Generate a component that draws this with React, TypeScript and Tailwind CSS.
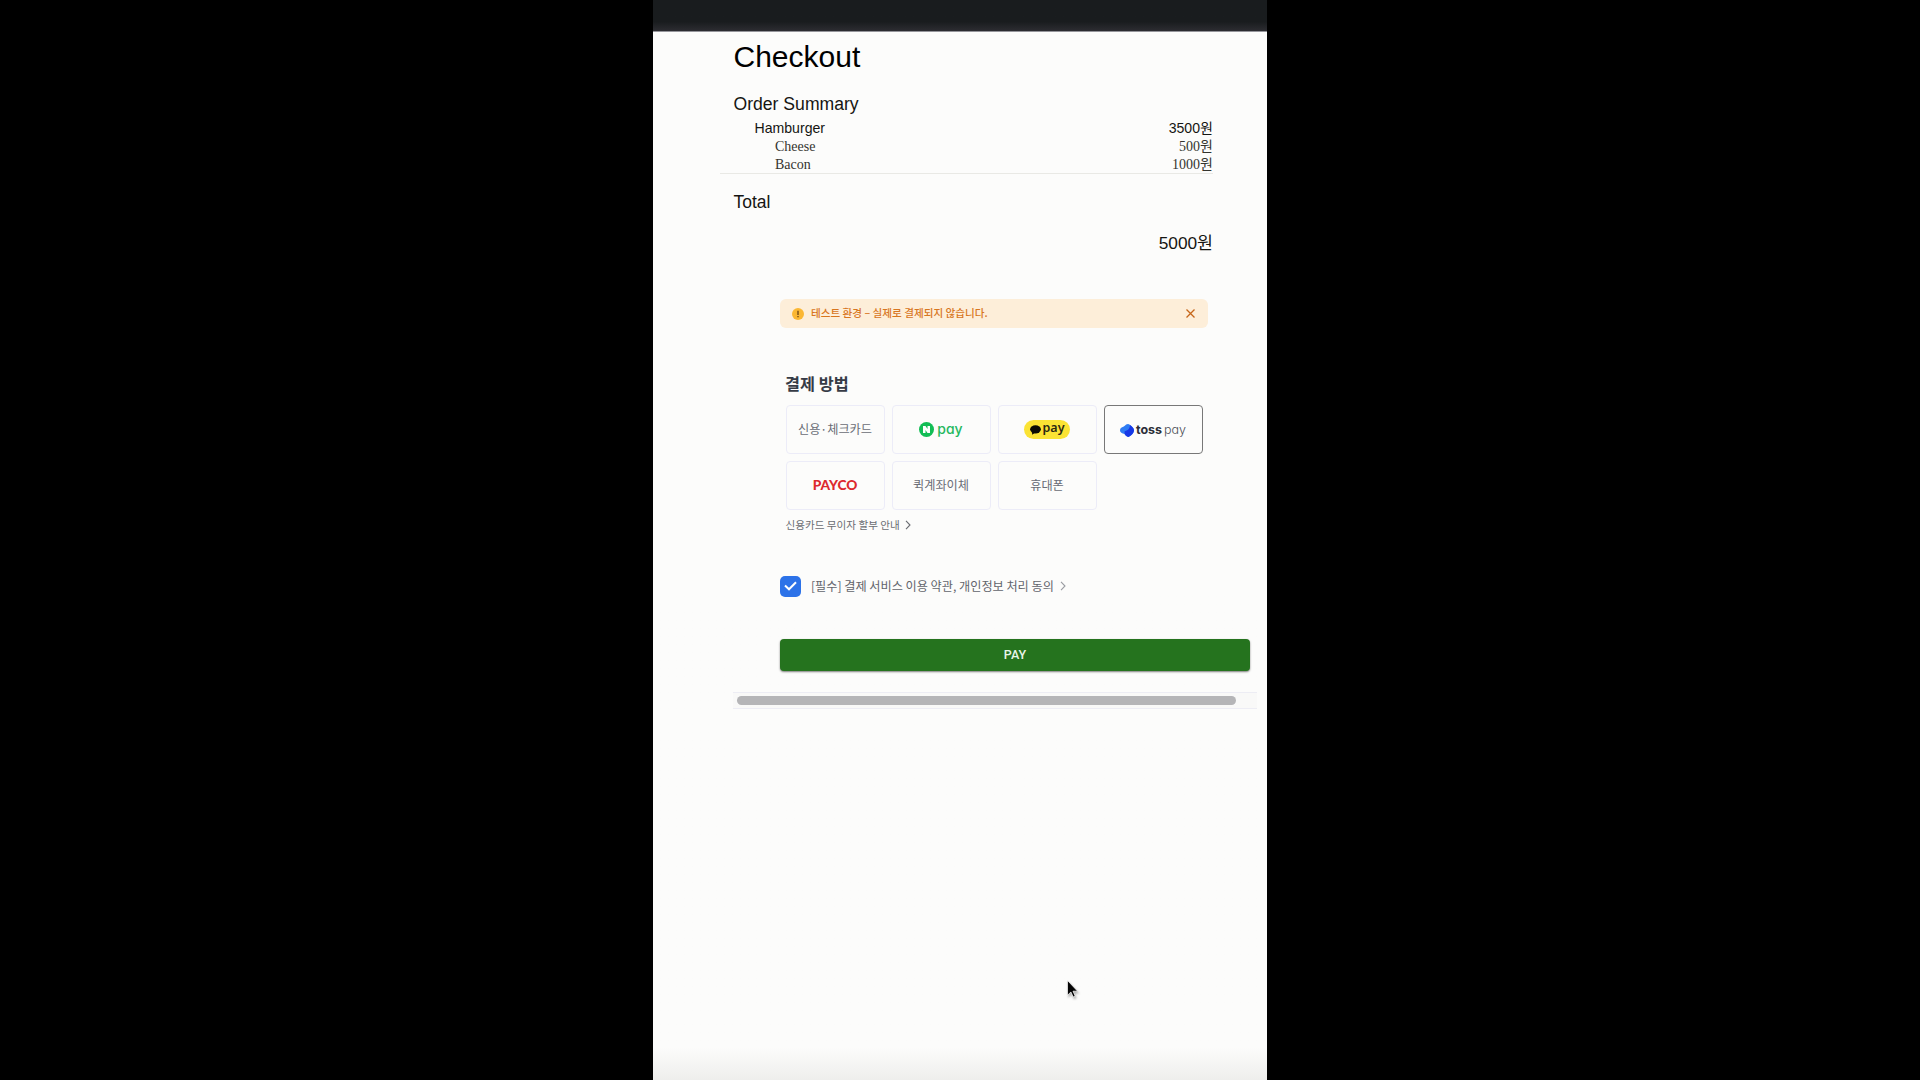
import React from 'react';

const SANS = "font-['Liberation_Sans','Noto_Sans_CJK_KR',sans-serif]";
const SERIF = "font-['Liberation_Serif','Noto_Sans_CJK_KR',serif]";
const KR = "font-['Noto_Sans_CJK_KR',sans-serif]";

function Row({ name, price, className }: { name: string; price: string; className: string }) {
  return (
    <div className={`flex justify-between whitespace-nowrap ${className}`}>
      <span>{name}</span>
      <span>{price}</span>
    </div>
  );
}

function Method({ children, selected = false }: { children: React.ReactNode; selected?: boolean }) {
  return (
    <button
      className={`flex items-center justify-center whitespace-nowrap rounded-[4px] border text-[12px] text-[#6a6d76] ${
        selected ? 'border-[#787878]' : 'border-[#ececf8]'
      }`}
    >
      {children}
    </button>
  );
}

function NaverPay() {
  return (
    <span className="flex items-center gap-[3px]">
      <svg width="15" height="15" viewBox="0 0 15 15">
        <circle cx="7.5" cy="7.5" r="7.5" fill="#12bd55" />
        <path d="M4 3.900h2.500l2 3V3.900H11v7.200H8.500l-2-3v3H4z" fill="#fff" />
      </svg>
      <span className="-mt-[2px] font-['Inter',sans-serif] text-[14px] font-medium leading-4 [font-feature-settings:'cv11'] text-[#25b860]">pay</span>
    </span>
  );
}

function KakaoPay() {
  return (
    <span className="flex h-[19px] w-[46px] items-center justify-center gap-[2px] rounded-full bg-[#fbe334]">
      <svg width="11" height="10" viewBox="0 0 11 10">
        <ellipse cx="5.500" cy="4.300" rx="5.400" ry="4.100" fill="#0c0c04" />
        <path d="M2.300 6.500 2 9.800l3.500-2.200z" fill="#0c0c04" />
      </svg>
      <span className="-mt-[3px] font-['Noto_Sans',sans-serif] text-[12.500px] font-semibold leading-4 text-[#2b2812]">pay</span>
    </span>
  );
}

function TossPay() {
  return (
    <span className="mt-[1px] flex items-center">
      <svg width="14" height="13" viewBox="0 0 14 13" className="mr-[2px]">
        <path d="M0 6.500C0 4.300 1.300 3.800 3.800 2.600 5.800.700 6.600 0 8 0c2 .3 6 3.700 6 6.300 0 2.900-3.500 5.900-5.600 6.700C6.600 12.600 5 10.800 4.600 10 2 9.300 0 8.600 0 6.500z" fill="#2f7cf3" />
        <path d="M4.600 10V7.300c3-.4 5.200-2.300 5.400-6.200C12 2.500 14 4.500 14 6.300c0 2.900-3.500 5.900-5.600 6.700C6.600 12.600 5 10.800 4.600 10z" fill="#1738e6" />
      </svg>
      <span className="font-['Inter',sans-serif] text-[12.500px] font-bold leading-4 text-[#2c2e38]">toss</span>
      <span className="ml-[2px] font-['Inter',sans-serif] text-[12.500px] font-light leading-4 [font-feature-settings:'cv11'] text-[#4b4d56]">pay</span>
    </span>
  );
}

function Chevron({ className }: { className: string }) {
  return (
    <svg width="6" height="10" viewBox="0 0 6 10" fill="none" strokeWidth="1.100" className={className}>
      <path d="M1 .8 5 5 1 9.200" stroke="currentColor" />
    </svg>
  );
}

export default function App() {
  return (
    <div className="relative flex h-[1080px] w-[1920px] justify-center overflow-hidden bg-black">
      <main className={`flex h-full w-[614px] flex-col bg-gradient-to-b from-[#fcfcfb] from-[97%] to-[#eeeeec] ${SANS}`}>
        <header className="h-8 shrink-0 border-b border-[#95959b] bg-gradient-to-b from-[#191c1e] from-70% to-[#2d2d32]" />

        <section className="flex flex-col pl-[80.500px] pr-[54px] text-[#151512]">
          <h1 className="mt-[4px] h-[42px] text-[30px] leading-[42px] text-black">Checkout</h1>
          <h2 className="mt-[13px] h-[26px] text-[17.600px] leading-[26px]">Order Summary</h2>
          <Row name="Hamburger" price="3500원" className="mt-[1px] h-[20px] pl-[21px] text-[14.100px] leading-[20px]" />
          <Row name="Cheese" price="500원" className={`h-[18px] pl-[41.500px] text-[14px] leading-[18px] text-[#34342f] ${SERIF}`} />
          <Row name="Bacon" price="1000원" className={`h-[17px] pl-[41.500px] text-[14px] leading-[17px] text-[#34342f] ${SERIF}`} />
          <div className="-ml-[14px] h-px bg-[#e9e9e5]" />
          <h2 className="mt-[15px] h-[26px] text-[17.500px] leading-[26px]">Total</h2>
          <p className="mt-[15px] h-[26px] text-right text-[17.300px] leading-[26px]">5000원</p>
        </section>

        <section className={`flex flex-col pl-[127px] ${KR}`}>
          <div className="mt-[43px] flex h-[29px] w-[428px] items-center rounded-[6px] bg-[#fdeed9] pl-3 pr-[13px] text-[#d8761e]">
            <svg width="12" height="12" viewBox="0 0 12 12">
              <circle cx="6" cy="6" r="6" fill="#fbb733" />
              <path d="M6 2.700v4.200M6 8v1.300" stroke="#6b4413" strokeWidth="1.300" />
            </svg>
            <span className="-mt-px ml-[7px] whitespace-nowrap text-[10.600px] font-medium leading-4">테스트 환경 – 실제로 결제되지 않습니다.</span>
            <svg width="9" height="9" viewBox="0 0 9 9" className="ml-auto">
              <path d="M.5.500l8 8M8.500.500l-8 8" stroke="#c6661a" strokeWidth="1.300" />
            </svg>
          </div>

          <h3 className="ml-[5px] mt-[43px] h-6 text-[16.300px] font-bold leading-6 text-[#363b46]">결제 방법</h3>

          <div className="ml-[5.500px] mt-[10px] grid h-[105px] w-[417px] grid-cols-4 grid-rows-2 gap-[7px]">
            <Method><span className="-mt-px text-[12.200px]">신용·체크카드</span></Method>
            <Method><NaverPay /></Method>
            <Method><KakaoPay /></Method>
            <Method selected><TossPay /></Method>
            <Method>
              <span className="-mt-px font-['Lato',sans-serif] text-[13.700px] font-black text-[#dc2a2e]">PAYCO</span>
            </Method>
            <Method><span className="-mt-px text-[12.200px]">퀵계좌이체</span></Method>
            <Method><span className="-mt-px text-[12.200px]">휴대폰</span></Method>
          </div>

          <a className="ml-[5.500px] mt-[7px] flex h-4 items-center whitespace-nowrap text-[10.600px] leading-4 text-[#6a6c72]">
            신용카드 무이자 할부 안내
            <Chevron className="ml-[5px]" />
          </a>

          <label className="mt-[42px] flex h-[22px] items-center whitespace-nowrap text-[12.150px] leading-[22px] text-[#62646b]">
            <span className="flex size-[21px] items-center justify-center rounded-[5px] bg-[#2c72e8]">
              <svg width="13" height="10" viewBox="0 0 13 10" fill="none">
                <path d="M1 4.500 5 8.300 12 1.300" stroke="#fff" strokeWidth="2" />
              </svg>
            </span>
            <span className="ml-[10px]">[필수] 결제 서비스 이용 약관, 개인정보 처리 동의</span>
            <Chevron className="ml-[6px] text-[#9a9ca2]" />
          </label>

          <button className="mt-[41.500px] h-[32px] w-[470px] rounded-[4px] bg-[#25731e] font-['Roboto',sans-serif] text-[12.500px] font-medium leading-[30px] text-[#e8f5e8] shadow-[0_1px_2px_rgba(0,0,0,0.5)]">
            PAY
          </button>
        </section>

        <div className="ml-[80px] mt-[21.500px] flex h-[17px] w-[524px] items-center border-y border-[#ededf4] bg-[#f9f9f8] px-[4px]">
          <div className="h-[9px] w-[499px] rounded-full bg-[#b5b5b7]" />
        </div>
      </main>

      <svg width="12" height="20" viewBox="0 0 12 20" className="absolute left-[1067px] top-[980px] drop-shadow-[1px_2px_1px_rgba(0,0,0,0.3)]">
        <path d="M.5.500v14.800l3.400-3.300 2.300 5 2-1-2.200-4.800h4.600z" fill="#050505" stroke="#fff" strokeWidth=".7" />
      </svg>
    </div>
  );
}
